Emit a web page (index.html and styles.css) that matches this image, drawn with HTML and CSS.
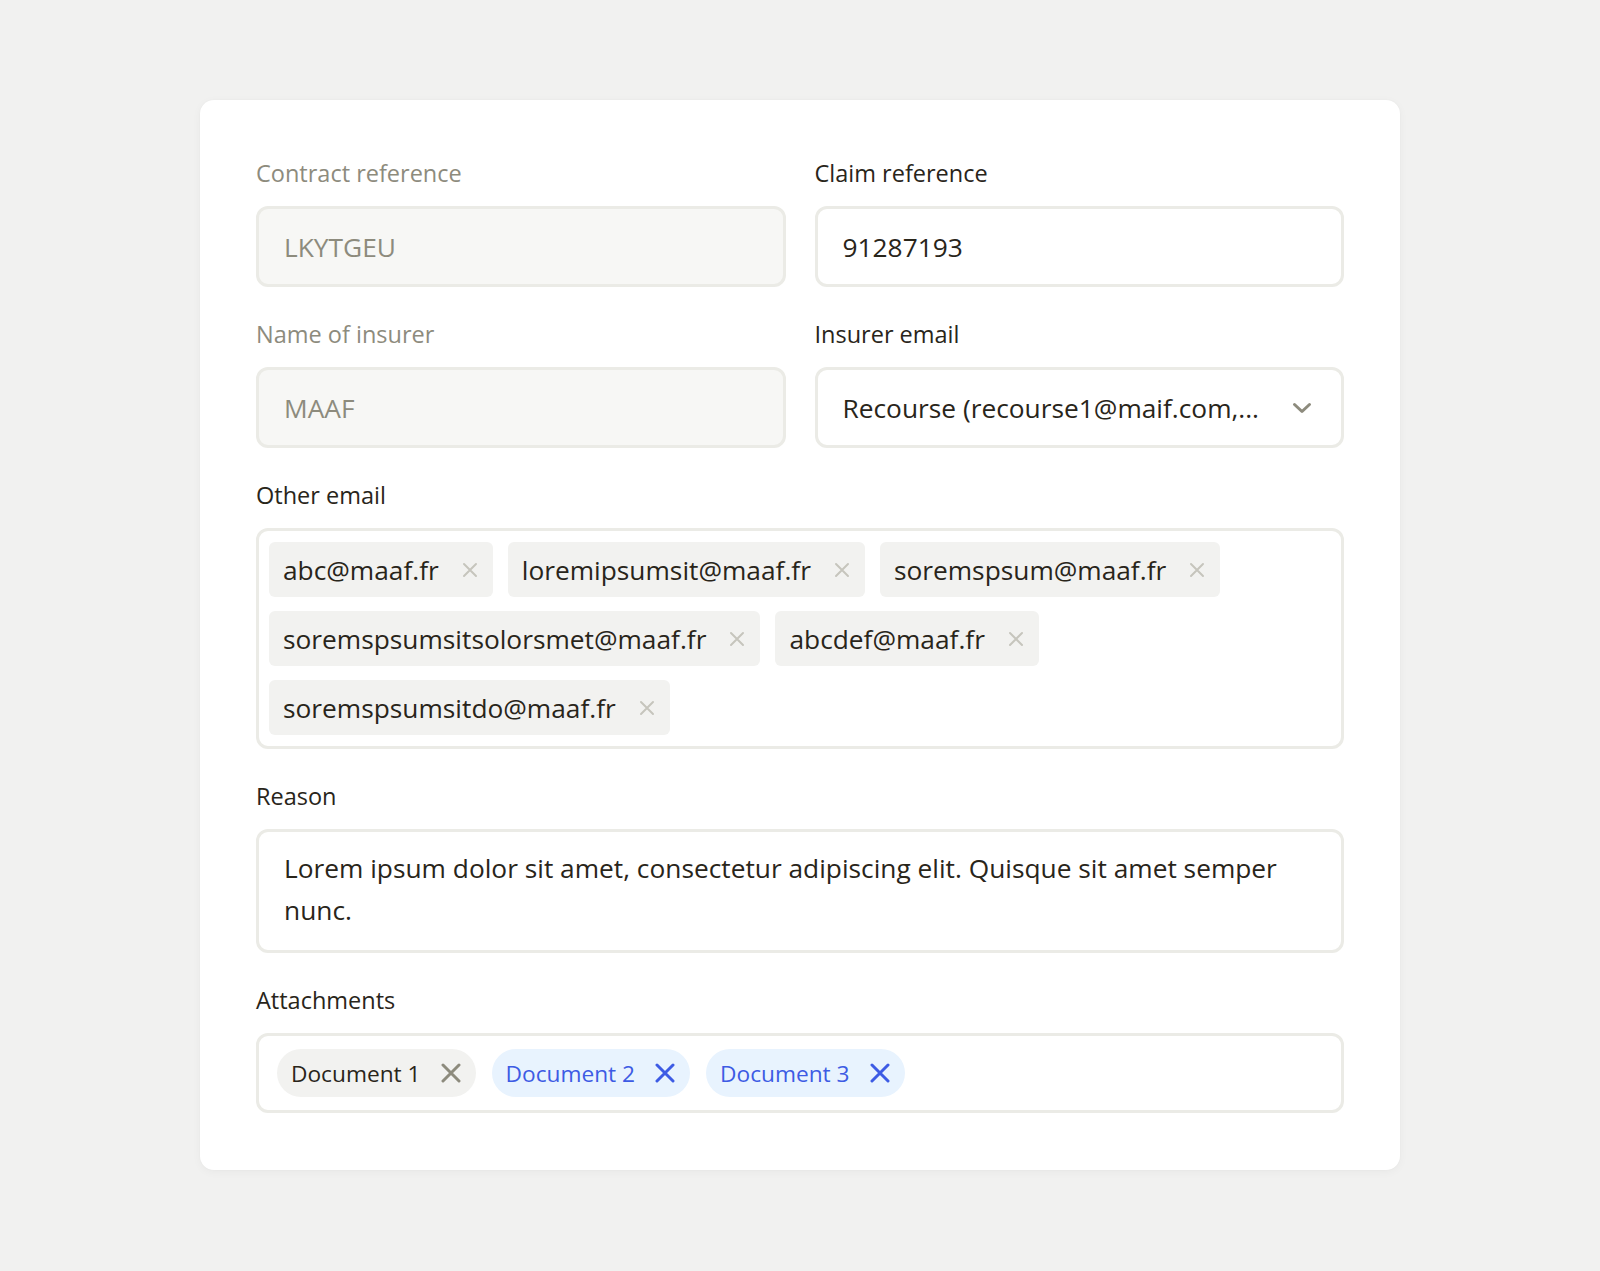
FILE: index.html
```html
<!DOCTYPE html>
<html lang="en">
<head>
<meta charset="utf-8">
<title>Claim form</title>
<link rel="stylesheet" href="styles.css">
</head>
<body>
<main class="page">
  <form class="card">
    <div class="grid">
      <div class="field">
        <label class="label label-muted">Contract reference</label>
        <div class="input input-disabled">LKYTGEU</div>
      </div>
      <div class="field">
        <label class="label">Claim reference</label>
        <div class="input">91287193</div>
      </div>
      <div class="field">
        <label class="label label-muted">Name of insurer</label>
        <div class="input input-disabled">MAAF</div>
      </div>
      <div class="field">
        <label class="label">Insurer email</label>
        <div class="input select">
          <span class="select-value">Recourse (recourse1@maif.com,...</span>
          <svg class="chevron" width="20" height="12" viewBox="0 0 20 12"><path d="M2.5 2.5 L10 9.5 L17.5 2.5" fill="none" stroke="#8d8b7d" stroke-width="3" stroke-linecap="round" stroke-linejoin="round"/></svg>
        </div>
      </div>
    </div>

    <div class="field">
      <label class="label">Other email</label>
      <div class="tags">
        <span class="tag">abc@maaf.fr<svg class="tag-x" width="16" height="16" viewBox="0 0 16 16"><path d="M2 2 L14 14 M14 2 L2 14" stroke="#c6c5bd" stroke-width="2" stroke-linecap="round"/></svg></span>
        <span class="tag">loremipsumsit@maaf.fr<svg class="tag-x" width="16" height="16" viewBox="0 0 16 16"><path d="M2 2 L14 14 M14 2 L2 14" stroke="#c6c5bd" stroke-width="2" stroke-linecap="round"/></svg></span>
        <span class="tag">soremspsum@maaf.fr<svg class="tag-x" width="16" height="16" viewBox="0 0 16 16"><path d="M2 2 L14 14 M14 2 L2 14" stroke="#c6c5bd" stroke-width="2" stroke-linecap="round"/></svg></span>
        <span class="tag">soremspsumsitsolorsmet@maaf.fr<svg class="tag-x" width="16" height="16" viewBox="0 0 16 16"><path d="M2 2 L14 14 M14 2 L2 14" stroke="#c6c5bd" stroke-width="2" stroke-linecap="round"/></svg></span>
        <span class="tag">abcdef@maaf.fr<svg class="tag-x" width="16" height="16" viewBox="0 0 16 16"><path d="M2 2 L14 14 M14 2 L2 14" stroke="#c6c5bd" stroke-width="2" stroke-linecap="round"/></svg></span>
        <span class="tag">soremspsumsitdo@maaf.fr<svg class="tag-x" width="16" height="16" viewBox="0 0 16 16"><path d="M2 2 L14 14 M14 2 L2 14" stroke="#c6c5bd" stroke-width="2" stroke-linecap="round"/></svg></span>
      </div>
    </div>

    <div class="field">
      <label class="label">Reason</label>
      <div class="textarea">Lorem ipsum dolor sit amet, consectetur adipiscing elit. Quisque sit amet semper nunc.</div>
    </div>

    <div class="field">
      <label class="label">Attachments</label>
      <div class="attachments">
        <span class="pill">Document 1<svg class="pill-x" width="20" height="20" viewBox="0 0 20 20"><path d="M2 2 L18 18 M18 2 L2 18" stroke="#8d8b7d" stroke-width="3" stroke-linecap="round"/></svg></span>
        <span class="pill pill-blue">Document 2<svg class="pill-x" width="20" height="20" viewBox="0 0 20 20"><path d="M2 2 L18 18 M18 2 L2 18" stroke="#3d5be4" stroke-width="3" stroke-linecap="round"/></svg></span>
        <span class="pill pill-blue">Document 3<svg class="pill-x" width="20" height="20" viewBox="0 0 20 20"><path d="M2 2 L18 18 M18 2 L2 18" stroke="#3d5be4" stroke-width="3" stroke-linecap="round"/></svg></span>
      </div>
    </div>
  </form>
</main>
</body>
</html>
```

FILE: styles.css
```css
* { box-sizing: border-box; }

html, body {
  margin: 0;
  padding: 0;
  background: #f1f1f0;
}

body {
  font-family: "Open Sans", "Liberation Sans", sans-serif;
  color: #29251a;
}

.page {
  padding: 100px 0 0 200px;
  min-height: 1271px;
}

.card {
  width: 1200px;
  background: #ffffff;
  border-radius: 14px;
  box-shadow: 0 2px 10px rgba(0, 0, 0, 0.04), 0 0 2px rgba(0, 0, 0, 0.03);
  padding: 56px 56px 57px 56px;
  display: flex;
  flex-direction: column;
  gap: 30px;
}

.grid {
  display: grid;
  grid-template-columns: 1fr 1fr;
  column-gap: 29px;
  row-gap: 30px;
}

.field {
  display: flex;
  flex-direction: column;
  gap: 16px;
}

.label {
  font-size: 23.5px;
  line-height: 34px;
  color: #29251a;
}

.label-muted {
  color: #8d8b7d;
}

.input {
  height: 81px;
  border: 3px solid #ebebe6;
  border-radius: 12px;
  padding: 0 25px;
  display: flex;
  align-items: center;
  font-size: 26.3px;
  color: #29251a;
  background: #ffffff;
}

.input-disabled {
  background: #f7f7f5;
  color: #8d8b7d;
}

.select {
  justify-content: space-between;
}

.select-value {
  white-space: nowrap;
}

.chevron {
  margin-right: 4px;
}

.tags {
  border: 3px solid #ebebe6;
  border-radius: 12px;
  padding: 11px 10px;
  display: flex;
  flex-wrap: wrap;
  column-gap: 15px;
  row-gap: 14px;
}

.tag {
  height: 55px;
  background: #f2f2f0;
  border-radius: 6px;
  padding: 0 15px 0 14px;
  display: inline-flex;
  align-items: center;
  gap: 23px;
  font-size: 26.3px;
  color: #29251a;
}

.textarea {
  border: 3px solid #ebebe6;
  border-radius: 12px;
  padding: 15px 25px 19px;
  font-size: 26.3px;
  line-height: 42px;
  color: #29251a;
  min-height: 124px;
}

.attachments {
  height: 80px;
  border: 3px solid #ebebe6;
  border-radius: 12px;
  padding: 0 18px;
  display: flex;
  align-items: center;
  gap: 16px;
}

.pill {
  height: 48px;
  border-radius: 24px;
  background: #f2f2f0;
  padding: 0 15px 0 14px;
  display: inline-flex;
  align-items: center;
  gap: 20px;
  font-size: 22.7px;
  color: #29251a;
}

.pill-blue {
  background: #e8f3fe;
  color: #3d5be4;
}
```
